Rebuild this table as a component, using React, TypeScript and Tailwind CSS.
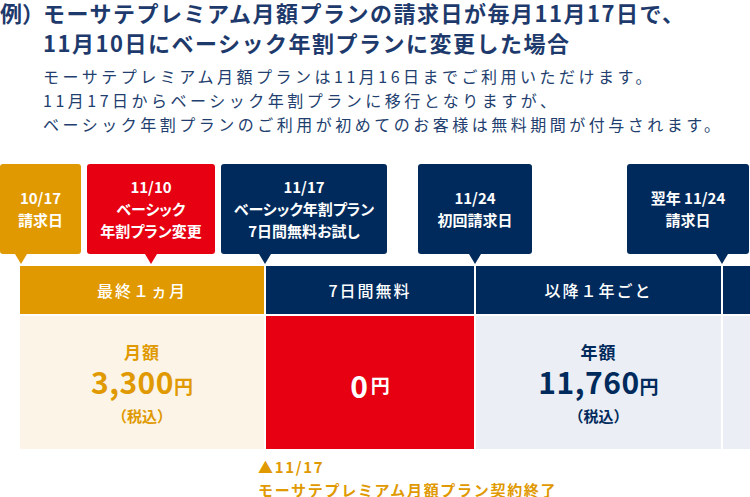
const gold = "bg-[#e09900]"

type Callout = {
  lines: string[]
  width: string
  offset: string
  tail: string
  color: "gold" | "red" | "navy"
}

const callouts: Callout[] = [
  { lines: ["10/17", "請求日"], width: "w-[81px]", offset: "ml-0", tail: "left-[15px]", color: "gold" },
  { lines: ["11/10", "ベーシック", "年割プラン変更"], width: "w-[128px]", offset: "ml-[6px]", tail: "left-[58px]", color: "red" },
  { lines: ["11/17", "ベーシック年割プラン", "7日間無料お試し"], width: "w-[166px]", offset: "ml-[6px]", tail: "left-[38px]", color: "navy" },
  { lines: ["11/24", "初回請求日"], width: "w-[114px]", offset: "ml-[31px]", tail: "left-[51px]", color: "navy" },
  { lines: ["翌年 11/24", "請求日"], width: "w-[122px]", offset: "ml-[95px]", tail: "left-[89px]", color: "navy" },
]

const boxColor = {
  gold: "bg-[#e09900]",
  red: "bg-[#e60012]",
  navy: "bg-[#002a5c]",
}

const tailColor = {
  gold: "border-t-[#e09900]",
  red: "border-t-[#e60012]",
  navy: "border-t-[#002a5c]",
}

function CalloutBox({ c }: { c: Callout }) {
  return (
    <div className={`relative h-[90px] shrink-0 rounded-[3px] ${c.width} ${c.offset} ${boxColor[c.color]} flex flex-col items-center justify-center text-white font-bold text-[15px] leading-[22px] [font-feature-settings:'palt']`}>
      {c.lines.map((l, i) => (
        <div key={i} className="whitespace-nowrap">{l}</div>
      ))}
      <div className={`absolute top-full ${c.tail} w-0 h-0 border-x-[6px] border-x-transparent border-t-[10px] ${tailColor[c.color]}`} />
    </div>
  )
}

function Price({ label, amount, tone }: { label: string; amount: string; tone: string }) {
  return (
    <div className={`h-full flex flex-col items-center justify-center pt-[3px] font-bold ${tone}`}>
      <div className="text-[17px] leading-[24px] tracking-[1px]">{label}</div>
      <div className="leading-[34px] whitespace-nowrap">
        <span className="text-[30px] tracking-[0.5px]">{amount}</span>
        <span className="text-[19px]">円</span>
      </div>
      <div className="text-[15px] leading-[24px]">（税込）</div>
    </div>
  )
}

export default function App() {
  return (
    <div className="w-[750px] h-[497px] overflow-hidden bg-white font-['Noto_Sans_CJK_JP',sans-serif]">
      <div className="flex -mt-[3px] text-[22px] leading-[30px] font-bold text-[#1e3a6c]">
        <span className="w-[43px] shrink-0 whitespace-nowrap">例）</span>
        <div className="whitespace-nowrap tracking-[1.5px]">
          モーサテプレミアム月額プランの請求日が毎月11月17日で、
          <br />
          11月10日にベーシック年割プランに変更した場合
        </div>
      </div>

      <div className="mt-[7px] pl-[43px] text-[16px] leading-[24px] tracking-[3.5px] text-[#223e6e] whitespace-nowrap">
        <p>モーサテプレミアム月額プランは11月16日までご利用いただけます。</p>
        <p>11月17日からベーシック年割プランに移行となりますが、</p>
        <p>ベーシック年割プランのご利用が初めてのお客様は無料期間が付与されます。</p>
      </div>

      <div className="flex mt-[28px]">
        {callouts.map((c, i) => (
          <CalloutBox key={i} c={c} />
        ))}
      </div>

      <div className="mt-[12px] ml-[20px] grid grid-cols-[244px_208px_245px_1fr] grid-rows-[48px_133px] gap-[2px]">
        <div className={`${gold} flex items-center justify-center text-white text-[16px] font-medium tracking-[2px]`}>最終１ヵ月</div>
        <div className="bg-[#002a5c] flex items-center justify-center text-white text-[16px] font-medium tracking-[2px]">7日間無料</div>
        <div className="bg-[#002a5c] flex items-center justify-center text-white text-[16px] font-medium tracking-[2px]">以降１年ごと</div>
        <div className="bg-[#002a5c]" />

        <div className="bg-[#fcf4e6]">
          <Price label="月額" amount="3,300" tone="text-[#e09900]" />
        </div>
        <div className="bg-[#e60012] flex items-center justify-center pt-[4px] text-white font-bold whitespace-nowrap">
          <span className="text-[30px] leading-[34px]">0</span>
          <span className="text-[19px] leading-[34px] ml-[3px]">円</span>
        </div>
        <div className="bg-[#ebeff5]">
          <Price label="年額" amount="11,760" tone="text-[#002a5c]" />
        </div>
        <div className="bg-[#ebeff5]" />
      </div>

      <div className="mt-[6px] pl-[258px] text-[15px] leading-[23px] font-bold tracking-[1.7px] text-[#e09900] whitespace-nowrap">
        <p>▲11/17</p>
        <p>モーサテプレミアム月額プラン契約終了</p>
      </div>
    </div>
  )
}
